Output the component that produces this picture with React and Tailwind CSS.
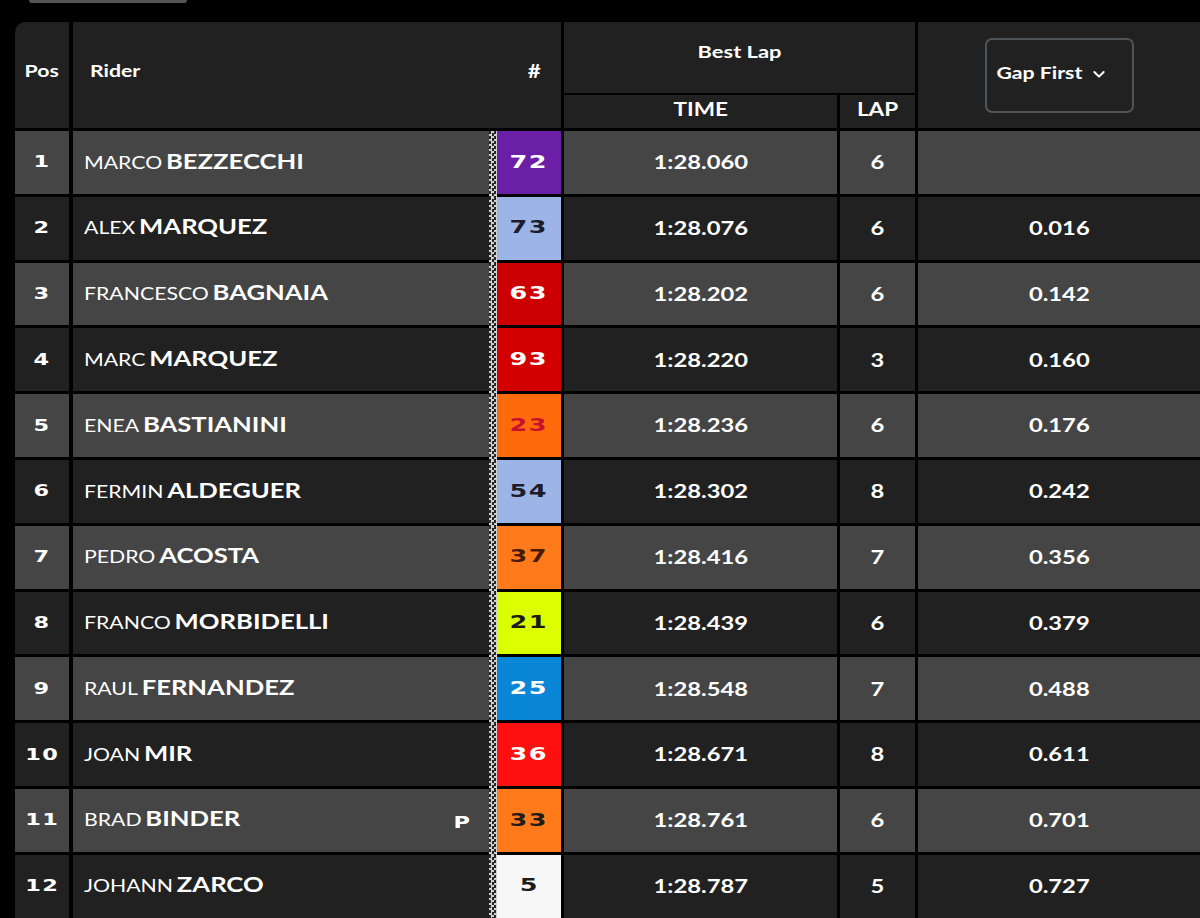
import React from "react";

const riders = [
  { pos: 1, first: "MARCO", last: "BEZZECCHI", num: "72", bg: "bg-[#6b1fa6]", fg: "text-white", time: "1:28.060", lap: 6, gap: "" },
  { pos: 2, first: "ALEX", last: "MARQUEZ", num: "73", bg: "bg-[#9db5e6]", fg: "text-[#1c1c2a]", time: "1:28.076", lap: 6, gap: "0.016" },
  { pos: 3, first: "FRANCESCO", last: "BAGNAIA", num: "63", bg: "bg-[#cc0000]", fg: "text-white", time: "1:28.202", lap: 6, gap: "0.142" },
  { pos: 4, first: "MARC", last: "MARQUEZ", num: "93", bg: "bg-[#d30000]", fg: "text-white", time: "1:28.220", lap: 3, gap: "0.160" },
  { pos: 5, first: "ENEA", last: "BASTIANINI", num: "23", bg: "bg-[#ff6a0d]", fg: "text-[#c8102e]", time: "1:28.236", lap: 6, gap: "0.176" },
  { pos: 6, first: "FERMIN", last: "ALDEGUER", num: "54", bg: "bg-[#9db5e6]", fg: "text-[#1c1c2a]", time: "1:28.302", lap: 8, gap: "0.242" },
  { pos: 7, first: "PEDRO", last: "ACOSTA", num: "37", bg: "bg-[#ff7a1a]", fg: "text-[#4a1a08]", time: "1:28.416", lap: 7, gap: "0.356" },
  { pos: 8, first: "FRANCO", last: "MORBIDELLI", num: "21", bg: "bg-[#dcff00]", fg: "text-[#1c1c1c]", time: "1:28.439", lap: 6, gap: "0.379" },
  { pos: 9, first: "RAUL", last: "FERNANDEZ", num: "25", bg: "bg-[#0a86d8]", fg: "text-white", time: "1:28.548", lap: 7, gap: "0.488" },
  { pos: 10, first: "JOAN", last: "MIR", num: "36", bg: "bg-[#ff1010]", fg: "text-white", time: "1:28.671", lap: 8, gap: "0.611" },
  { pos: 11, first: "BRAD", last: "BINDER", num: "33", bg: "bg-[#ff7a1a]", fg: "text-[#1c1c1c]", time: "1:28.761", lap: 6, gap: "0.701", pit: true },
  { pos: 12, first: "JOHANN", last: "ZARCO", num: "5", bg: "bg-[#f7f7f7]", fg: "text-[#1c1c1c]", time: "1:28.787", lap: 5, gap: "0.727" },
];

// the screenshot is stretched sideways, so text gets a horizontal scale
const sx = "inline-block scale-x-[1.25]";
const wide = "inline-block font-['DejaVu_Sans',sans-serif] font-bold scale-x-[1.4] tracking-[1px]";
const cell = "flex items-center justify-center font-['Lato',sans-serif] font-bold text-[19px]";

function Row({ r }) {
  const shade = r.pos % 2 === 1 ? "bg-[#454545]" : "bg-[#212121]";
  return (
    <div className="flex h-[62.8px] text-white">
      <div className={`w-[54px] mr-[4px] flex items-center justify-center ${shade}`}>
        <span className={`${wide} text-[16px]`}>{r.pos}</span>
      </div>
      <div className={`flex-1 flex items-center pl-[11px] pr-[20px] ${shade}`}>
        <span className={`${sx} origin-left font-['Lato',sans-serif] -mt-[3px]`}>
          <span className="text-[17px]">{r.first}</span>
          <span className="text-[20.5px] font-bold ml-[3px]">{r.last}</span>
        </span>
        {r.pit && <span className={`${wide} ml-auto text-[16px] mt-[6px]`}>P</span>}
      </div>
      <div className="w-[8px] self-stretch -mb-[3px] bg-[#1a1a1a] bg-[repeating-conic-gradient(#d0d0d0_0_25%,#262626_0_50%)] bg-[length:5px_5px]" />
      <div className={`w-[64px] mr-[3px] flex items-center justify-center ${r.bg} ${r.fg}`}>
        <span className={`${wide} text-[17px] scale-x-[1.5]`}>{r.num}</span>
      </div>
      <div className={`w-[273px] mr-[3px] ${cell} ${shade}`}>
        <span className={sx}>{r.time}</span>
      </div>
      <div className={`w-[75px] mr-[3px] ${cell} ${shade}`}>
        <span className={sx}>{r.lap}</span>
      </div>
      <div className={`w-[282px] ${cell} ${shade}`}>
        <span className={sx}>{r.gap}</span>
      </div>
    </div>
  );
}

export default function App() {
  return (
    <div className="w-[1200px] h-[918px] bg-black overflow-hidden">
      <div className="ml-[29px] w-[158px] h-[3px] bg-[#555] rounded-b-[4px]" />
      <div className="ml-[15px] mt-[19px] flex flex-col">
        <div className="flex h-[106px] text-white font-['Lato',sans-serif] font-bold text-[17px]">
          <div className="w-[54px] mr-[4px] bg-[#212121] rounded-tl-[10px] flex items-center justify-center pb-[8px]">
            <span className={sx}>Pos</span>
          </div>
          <div className="w-[488px] mr-[3px] bg-[#212121] flex items-center justify-between pl-[17px] pr-[22px] pb-[8px]">
            <span className={`${sx} origin-left`}>Rider</span>
            <span className={`${sx} text-[18px]`}>#</span>
          </div>
          <div className="w-[351px] mr-[3px] flex flex-col gap-[2px]">
            <div className="h-[71px] bg-[#212121] flex items-center justify-center pb-[10px]">
              <span className={`${sx} text-[17.5px]`}>Best Lap</span>
            </div>
            <div className="flex flex-1 text-[18px]">
              <div className="w-[273px] mr-[3px] bg-[#212121] flex items-center justify-center pb-[4px]">
                <span className={sx}>TIME</span>
              </div>
              <div className="flex-1 bg-[#212121] flex items-center justify-center pb-[4px]">
                <span className={sx}>LAP</span>
              </div>
            </div>
          </div>
          <div className="w-[282px] bg-[#212121] flex items-start justify-center pt-[16px]">
            <button className="w-[149px] h-[75px] border-2 border-[#4f5459] rounded-[7px] flex items-start justify-center pt-[20px] pr-[6px] gap-[17px] text-white font-bold">
              <span className={`${sx} text-[17px]`}>Gap First</span>
              <svg width="16" height="16" viewBox="0 0 24 24" fill="none" stroke="currentColor" strokeWidth="3" strokeLinecap="round" strokeLinejoin="round" className="mt-[6px]">
                <path d="M5 9l7 7 7-7" />
              </svg>
            </button>
          </div>
        </div>
        <div className="flex flex-col gap-[3px] mt-[3px]">
          {riders.map((r) => (
            <Row key={r.pos} r={r} />
          ))}
        </div>
      </div>
    </div>
  );
}
